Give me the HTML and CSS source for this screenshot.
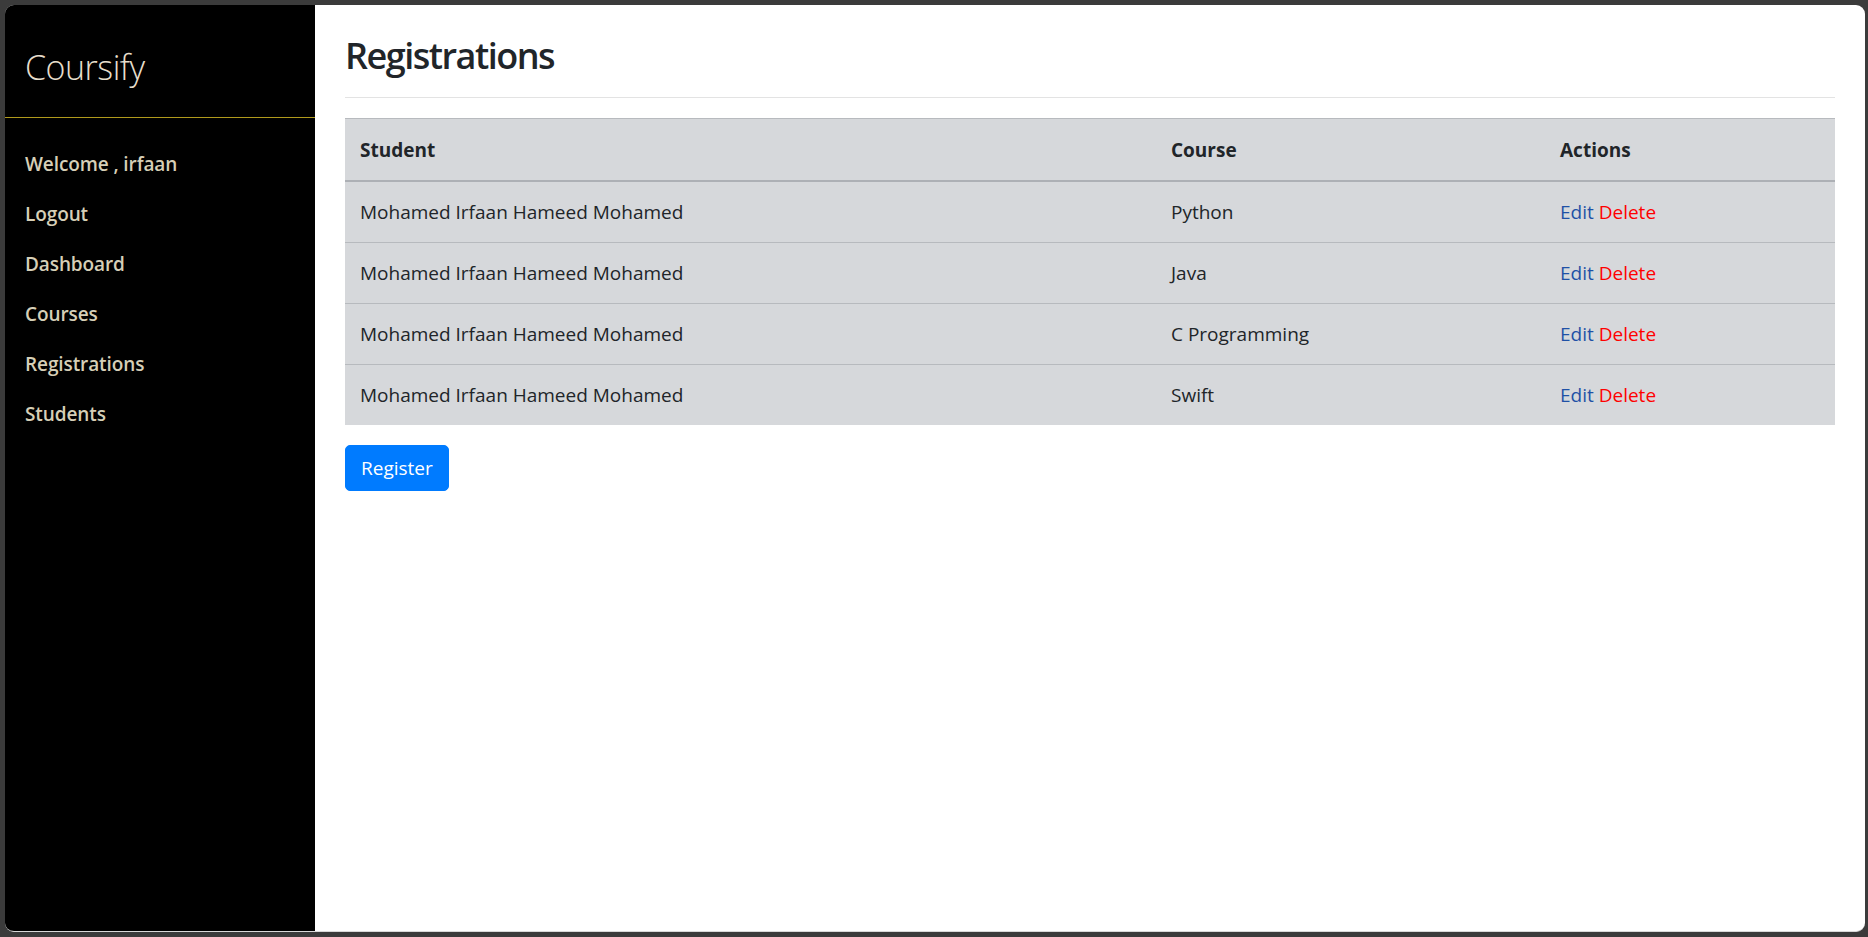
FILE: index.html
```html
<!DOCTYPE html>
<html lang="en">
<head>
<meta charset="utf-8">
<title>Coursify - Registrations</title>
<link rel="stylesheet" href="styles.css">
</head>
<body>
<div class="window">
  <aside class="sidebar">
    <div class="brand">Coursify</div>
    <nav class="nav">
      <a class="nav-item" href="#">Welcome , irfaan</a>
      <a class="nav-item" href="#">Logout</a>
      <a class="nav-item" href="#">Dashboard</a>
      <a class="nav-item" href="#">Courses</a>
      <a class="nav-item" href="#">Registrations</a>
      <a class="nav-item" href="#">Students</a>
    </nav>
  </aside>
  <main class="main">
    <h2 class="title">Registrations</h2>
    <hr class="divider">
    <table class="table">
      <thead>
        <tr>
          <th class="col-student">Student</th>
          <th class="col-course">Course</th>
          <th class="col-actions">Actions</th>
        </tr>
      </thead>
      <tbody>
        <tr>
          <td>Mohamed Irfaan Hameed Mohamed</td>
          <td>Python</td>
          <td><a class="edit" href="#">Edit</a> <a class="delete" href="#">Delete</a></td>
        </tr>
        <tr>
          <td>Mohamed Irfaan Hameed Mohamed</td>
          <td>Java</td>
          <td><a class="edit" href="#">Edit</a> <a class="delete" href="#">Delete</a></td>
        </tr>
        <tr>
          <td>Mohamed Irfaan Hameed Mohamed</td>
          <td>C Programming</td>
          <td><a class="edit" href="#">Edit</a> <a class="delete" href="#">Delete</a></td>
        </tr>
        <tr>
          <td>Mohamed Irfaan Hameed Mohamed</td>
          <td>Swift</td>
          <td><a class="edit" href="#">Edit</a> <a class="delete" href="#">Delete</a></td>
        </tr>
      </tbody>
    </table>
    <button class="btn-primary" type="button">Register</button>
  </main>
</div>
</body>
</html>
```

FILE: styles.css
```css
* {
  box-sizing: border-box;
}

html, body {
  margin: 0;
  padding: 0;
  height: 100%;
}

body {
  background: #3b3b3b;
  font-family: "Open Sans", "Noto Sans", "Liberation Sans", sans-serif;
  color: #212529;
  padding: 5px 3px 5px 5px;
}

.window {
  display: flex;
  height: 927px;
  border-radius: 9px;
  overflow: hidden;
  background: #ffffff;
  border-bottom: 1px solid #d8d8d8;
}

.sidebar {
  width: 310px;
  flex: 0 0 310px;
  background: #000000;
  display: flex;
  flex-direction: column;
}

.brand {
  height: 113px;
  border-bottom: 1px solid #b09a1c;
  color: #e6decb;
  font-size: 34px;
  font-weight: 300;
  padding: 40px 0 0 20px;
  line-height: 44px;
  letter-spacing: -0.5px;
}

.nav {
  display: flex;
  flex-direction: column;
  padding-top: 21px;
}

.nav-item {
  display: block;
  height: 50px;
  line-height: 50px;
  padding-left: 20px;
  color: #d6cfb7;
  font-size: 19px;
  font-weight: 600;
  text-decoration: none;
  letter-spacing: -0.1px;
}

.main {
  flex: 1;
  padding: 27px 30px 0 30px;
}

.title {
  margin: 0;
  font-size: 36px;
  font-weight: 600;
  line-height: 48px;
  letter-spacing: -1.5px;
  color: #212529;
}

.divider {
  margin: 17px 0 20px 0;
  border: 0;
  border-top: 1px solid #e3e3e3;
}

.table {
  width: 100%;
  border-collapse: collapse;
  background: #d6d8db;
  font-size: 19px;
  margin-bottom: 20px;
}

.table th,
.table td {
  text-align: left;
  padding: 15px 15px;
  line-height: 30px;
  height: 61px;
  border-top: 1px solid #b7babe;
}

.table th {
  font-weight: 700;
  height: 62px;
  padding-top: 16px;
  padding-bottom: 14px;
  border-bottom: 2px solid #adb0b5;
}

.col-student {
  width: 811px;
}

.col-course {
  width: 389px;
}

.edit {
  color: #1f51a6;
  text-decoration: none;
}

.delete {
  color: #ff0000;
  text-decoration: none;
}

.btn-primary {
  display: block;
  background: #007bff;
  color: #ffffff;
  border: 1px solid #007bff;
  border-radius: 5px;
  font-family: inherit;
  font-size: 19px;
  line-height: 30px;
  padding: 7px 15px;
  cursor: pointer;
}
```
